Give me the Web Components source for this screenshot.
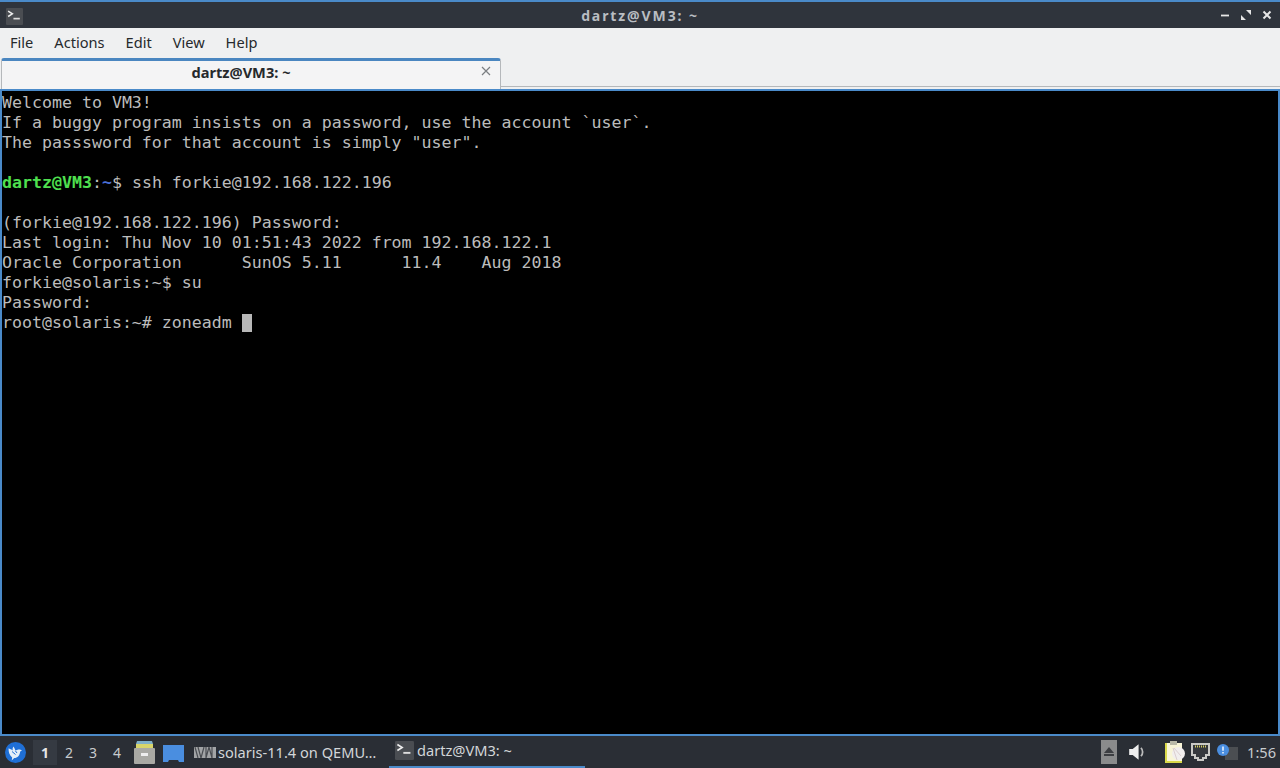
<!DOCTYPE html>
<html>
<head>
<meta charset="utf-8">
<style>
html, body { margin: 0; padding: 0; width: 1280px; height: 768px; overflow: hidden; background: #000; }
body { display: flex; flex-direction: column; font-family: "Noto Sans", sans-serif; }
term-window { flex: 1; min-height: 0; }
</style>
</head>
<body>
<term-window>
  <title-bar>dartz@VM3: ~</title-bar>
  <menu-bar></menu-bar>
  <tab-bar>dartz@VM3: ~</tab-bar>
  <term-view></term-view>
</term-window>
<task-bar></task-bar>

<script>
const termIcon = (size) => `<svg width="${size}" height="${size}" viewBox="0 0 16 16"><rect width="16" height="16" rx="1" fill="#4a4d52"/><path d="M2 3l4 2.5L2 8" fill="none" stroke="#eee" stroke-width="1.4"/><path d="M7 10h6" stroke="#ddd" stroke-width="1.6"/></svg>`;

class TermWindow extends HTMLElement {
  constructor() {
    super();
    this.attachShadow({ mode: "open" }).innerHTML = `
    <style>
      :host { display: flex; flex-direction: column; }
    </style>
    <slot></slot>`;
  }
}

class TitleBar extends HTMLElement {
  constructor() {
    super();
    this.attachShadow({ mode: "open" }).innerHTML = `
    <style>
      :host {
        display: flex; align-items: center; justify-content: space-between;
        height: 26px; background: #2f343c; border-top: 2px solid #4a8ac9;
        padding: 0 6px 0 6px; position: relative;
      }
      .title {
        position: absolute; left: 0; right: 0; top: 0; bottom: 0;
        display: flex; align-items: center; justify-content: center;
        color: #b9bdc2; font: bold 14px "Noto Sans", sans-serif; letter-spacing: 1.9px;
      }
      .btns { display: flex; gap: 9px; align-items: center; position: relative; padding-right: 1px; }
      .left { position: relative; display: flex; margin-top: 2px; }
    </style>
    <div class="left">${termIcon(17)}</div>
    <div class="title"><slot></slot></div>
    <div class="btns">
      <svg width="12" height="12" viewBox="0 0 12 12"><path d="M2 6.5h8" stroke="#e6e6e6" stroke-width="1.8"/></svg>
      <svg width="12" height="12" viewBox="0 0 12 12"><path d="M6 1h5v5zM6 11H1V6z" fill="#e6e6e6"/></svg>
      <svg width="12" height="12" viewBox="0 0 12 12"><path d="M2.5 2.5l7 7M9.5 2.5l-7 7" stroke="#e6e6e6" stroke-width="2"/></svg>
    </div>`;
  }
}

class MenuBar extends HTMLElement {
  constructor() {
    super();
    const items = ["File", "Actions", "Edit", "View", "Help"];
    this.attachShadow({ mode: "open" }).innerHTML = `
    <style>
      :host {
        display: flex; align-items: center; gap: 21px; height: 27px; padding: 0 0 3px 10px;
        background: #eff0f1; color: #26292c; font: 14.6px "Noto Sans", sans-serif;
      }
    </style>
    ${items.map(i => `<span>${i}</span>`).join("")}`;
  }
}

class TabBar extends HTMLElement {
  constructor() {
    super();
    this.attachShadow({ mode: "open" }).innerHTML = `
    <style>
      :host {
        display: flex; height: 31px; background: #eff0f1; padding-left: 1px;
        border-bottom: 2px solid #4a8ac9;
      }
      .tab {
        box-sizing: border-box; width: 500px; height: 31px; background: #f4f4f5;
        border-top: 3px solid #4a86c0; border-left: 1px solid #b5b8bb; border-right: 1px solid #b5b8bb;
        border-radius: 3px 3px 0 0; position: relative;
        display: flex; align-items: center; justify-content: center; padding: 0 20px 6px 0;
        color: #26292c; font: bold 14.6px "Noto Sans", sans-serif;
      }
      svg { position: absolute; right: 9px; top: 5px; }
      .rest { flex: 1; height: 28px; border-bottom: 1px solid #b5b8bb; }
    </style>
    <div class="tab"><slot></slot>
      <svg width="10" height="10" viewBox="0 0 10 10"><path d="M1 1l8 8M9 1l-8 8" stroke="#7b7e82" stroke-width="1.2"/></svg>
    </div>
    <div class="rest"></div>`;
  }
}

class TermView extends HTMLElement {
  constructor() {
    super();
    this.attachShadow({ mode: "open" }).innerHTML = `
    <style>
      :host {
        display: block; box-sizing: border-box; flex: 1; min-height: 0; background: #000; padding-top: 2px;
        border-left: 2px solid #4a8ac9; border-right: 2px solid #4a8ac9; border-bottom: 2px solid #4a8ac9;
        color: #bcbcbc; font: 16.6px/20px "DejaVu Sans Mono", monospace; overflow: hidden;
      }
      pre { margin: 0; font: inherit; }
      .g { color: #4fe04f; font-weight: bold; }
      .b { color: #4a6fd8; font-weight: bold; }
      .c { display: inline-block; width: 10px; height: 18px; background: #b8b8b8; vertical-align: -4px; }
    </style>
<pre>Welcome to VM3!
If a buggy program insists on a password, use the account \`user\`.
The passsword for that account is simply "user".

<span class="g">dartz@VM3</span>:<span class="b">~</span>$ ssh forkie@192.168.122.196

(forkie@192.168.122.196) Password: 
Last login: Thu Nov 10 01:51:43 2022 from 192.168.122.1
Oracle Corporation      SunOS 5.11      11.4    Aug 2018
forkie@solaris:~$ su
Password: 
root@solaris:~# zoneadm <span class="c"></span></pre>`;
  }
}

class TaskBar extends HTMLElement {
  constructor() {
    super();
    this.attachShadow({ mode: "open" }).innerHTML = `
    <style>
      :host {
        display: flex; align-items: center; height: 32px; background: #2a2e35;
        color: #d3d6d9; font: 14.6px "Noto Sans", sans-serif;
      }
      .logo { margin-left: 5px; width: 21px; height: 21px; }
      .desks { display: flex; margin-left: 7px; font-size: 14px; }
      .desks span { width: 24px; text-align: center; line-height: 25px; height: 25px; color: #c8cbce; }
      .desks .on { background: #353a42; font-weight: bold; color: #e6e6e6; }
      .launch { display: flex; gap: 8px; margin-left: 5px; }
      .win { display: flex; align-items: center; height: 32px; box-sizing: border-box; }
      .w1 { margin-left: 10px; width: 195px; gap: 2px; }
      .w2 { width: 196px; padding: 0 0 2px 6px; gap: 3px; border-bottom: 2px solid #4a8ac9; }
      .spacer { flex: 1; }
      .tray { display: flex; align-items: center; }
      .clock { margin: 0 4px 0 9px; color: #c8cbce; font-size: 14.6px; }
    </style>
    <svg class="logo" viewBox="0 0 21 21"><circle cx="10.5" cy="10.5" r="10.5" fill="#1f6fd6"/><path d="M3.5 6.5c1.5.2 3 .9 4.3 2C7.4 7 7.6 5.6 8.5 4.5c.8 1.3 1.5 2.7 2 4.3.9-.9 2.5-1.5 4.5-1.3l2 1-1.8.9c-.3 3.8-2.6 6.4-6 6.6l-2.5 2.5.5-3C4.7 13.500 3.5 10.500 3.5 6.500z" fill="#e4eef8"/><path d="M7 9.5l3.5 3M10.5 9l1.5 2" stroke="#1f6fd6" stroke-width="1" fill="none"/></svg>
    <div class="desks"><span class="on">1</span><span>2</span><span>3</span><span>4</span></div>
    <div class="launch">
      <svg width="21" height="23" viewBox="0 0 21 23"><path d="M3 0h15l1 3H2z" fill="#7fb0c9"/><path d="M2 3h17v5H2z" fill="#d8d56a"/><rect y="7" width="21" height="16" rx="1" fill="#a9a9a4"/><rect x="7" y="12" width="7" height="3" fill="#eee"/></svg>
      <svg width="21" height="18" viewBox="0 0 21 18" style="margin-top:3px"><path d="M0 1h21v17h-5l-1-2H6l-1 2H0z" fill="#4a8ee0"/></svg>
    </div>
    <div class="win w1">
      <svg width="22" height="11" viewBox="0 0 22 11"><rect width="22" height="11" fill="#a2a4a6"/><path d="M1 0l3 11M4 0l3 11 3-11M12 0v11l3-11 3 11V0" stroke="#4a4d52" stroke-width="1.2" fill="none"/></svg>
      <span>solaris-11.4 on QEMU…</span>
    </div>
    <div class="win w2">${termIcon(19)}<span>dartz@VM3: ~</span></div>
    <div class="spacer"></div>
    <div class="tray">
      <svg width="16" height="24" viewBox="0 0 16 24"><rect width="16" height="24" fill="#8a8b8c"/><path d="M8 7l5 6H3z" fill="#3c3e42"/><rect x="3" y="14" width="10" height="2" fill="#3c3e42"/></svg>
      <svg style="margin-left:11px" width="20" height="20" viewBox="0 0 17 17"><path d="M1 6h3l5-4v13l-5-4H1z" fill="#eee"/><path d="M11 5a5 5 0 0 1 0 7" fill="none" stroke="#bbb" stroke-width="1.5"/></svg>
      <svg style="margin-left:17px" width="20" height="22" viewBox="0 0 20 22"><path d="M0 2h17v20H0z" fill="#d9d94a"/><rect x="2" y="2" width="15" height="18" fill="#f8f5d8"/><rect x="5" y="0" width="7" height="4" fill="#b9b9a8"/><circle cx="13.5" cy="12.5" r="6.5" fill="#f1eeee"/><path d="M8 7l4 12M9 7l7 8" stroke="#dccfd0" stroke-width="1"/></svg>
      <svg style="margin-left:6px" width="19" height="18" viewBox="0 0 19 18"><path d="M0 0h19v13h-3v3h-3v2H6v-2H3v-3H0z" fill="#c9c9c6"/><path d="M2 2h15v9h-3v3h-3v2H8v-2H5v-3H2z" fill="#35383d"/><path d="M4 3.5h11" stroke="#d6ce62" stroke-width="2" stroke-dasharray="1 1"/></svg>
      <svg style="margin-left:7px" width="21" height="16" viewBox="0 0 21 16"><rect x="8" y="3" width="13" height="13" fill="#4b4e52"/><circle cx="6" cy="6" r="6" fill="#4a8ee0"/><path d="M6 2.5v4.2M6 8v1.4" stroke="#fff" stroke-width="1.4"/></svg>
    </div>
    <span class="clock">1:56</span>`;
  }
}

customElements.define("term-window", TermWindow);
customElements.define("title-bar", TitleBar);
customElements.define("menu-bar", MenuBar);
customElements.define("tab-bar", TabBar);
customElements.define("term-view", TermView);
customElements.define("task-bar", TaskBar);
</script>
</body>
</html>
